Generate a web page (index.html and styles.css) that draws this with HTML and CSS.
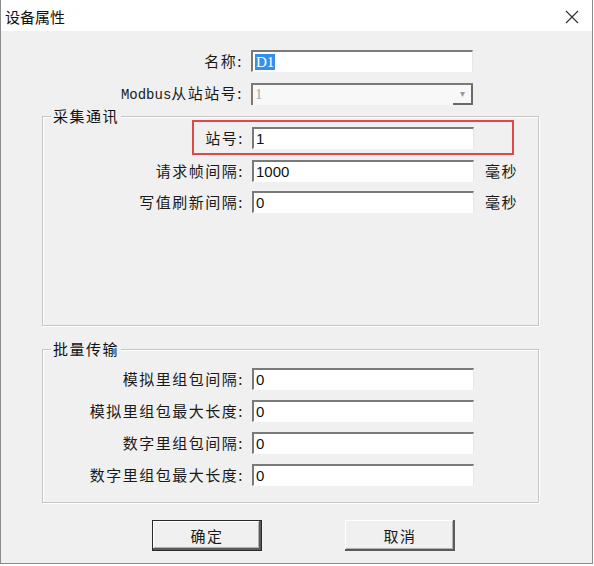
FILE: index.html
```html
<!DOCTYPE html>
<html lang="zh-CN">

<head>
  <meta charset="UTF-8">
  <title>设备属性</title>
  <link rel="stylesheet" href="styles.css">
</head>

<body>
  <div class="dialog">
    <div class="titlebar">
      <span class="title">设备属性</span>
      <svg class="close" width="14" height="14" viewBox="0 0 14 14">
        <path d="M1 1 L13 13 M13 1 L1 13" stroke="#333" stroke-width="1.2" fill="none" />
      </svg>
    </div>

    <div class="content">
      <div class="row top">
        <span class="lbl">名称:</span>
        <div class="field"><span class="selected">D1</span></div>
      </div>
      <div class="row top gap-11">
        <span class="lbl"><span class="mono">Modbus</span>从站站号:</span>
        <div class="field combo">
          <span class="muted">1</span>
          <span class="arrow">&#9662;</span>
        </div>
      </div>

      <!-- 采集通讯 -->
      <div class="group group-collect">
        <div class="legend">采集通讯</div>
        <div class="row highlight">
          <span class="lbl">站号:</span>
          <div class="field">1</div>
        </div>
        <div class="row in-group gap-5">
          <span class="lbl">请求帧间隔:</span>
          <div class="field">1000</div>
          <span class="unit">毫秒</span>
        </div>
        <div class="row in-group gap-9">
          <span class="lbl">写值刷新间隔:</span>
          <div class="field">0</div>
          <span class="unit">毫秒</span>
        </div>
      </div>

      <!-- 批量传输 -->
      <div class="group group-batch">
        <div class="legend">批量传输</div>
        <div class="row in-group gap-10">
          <span class="lbl">模拟里组包间隔:</span>
          <div class="field">0</div>
        </div>
        <div class="row in-group gap-10">
          <span class="lbl">模拟里组包最大长度:</span>
          <div class="field">0</div>
        </div>
        <div class="row in-group gap-10">
          <span class="lbl">数字里组包间隔:</span>
          <div class="field">0</div>
        </div>
        <div class="row in-group gap-10">
          <span class="lbl">数字里组包最大长度:</span>
          <div class="field">0</div>
        </div>
      </div>

      <div class="buttons">
        <button type="button" class="btn default">确定</button>
        <button type="button" class="btn">取消</button>
      </div>
    </div>
  </div>
</body>

</html>
```

FILE: styles.css
```css
body {
  margin: 0;
  background-color: #fff;
  font-family: "Noto Sans CJK SC", "Liberation Sans", sans-serif;
  color: #1a1a1a;
}

.dialog {
  width: 593px;
  height: 564px;
  box-sizing: border-box;
  border: 1px solid #8c8c8c;
  border-top: none;
  background-color: #f0f0f0;
}

.titlebar {
  height: 31px;
  background-color: #fff;
  display: flex;
  align-items: center;
  justify-content: space-between;
  padding: 2px 13px 0 4px;
  box-sizing: border-box;
}

.title {
  font-size: 15px;
  color: #111;
}

.close {
  display: block;
}

.content {
  padding-top: 19px;
  font-size: 15px;
  letter-spacing: 1.5px;
}

.row {
  display: flex;
  align-items: center;
  height: 22px;
}

.gap-5 { margin-top: 5px; }
.gap-9 { margin-top: 9px; }
.gap-10 { margin-top: 10px; }
.gap-11 { margin-top: 11px; }

.lbl {
  flex: none;
  text-align: right;
  margin-right: 8px;
  white-space: nowrap;
  line-height: 22px;
}

.top .lbl {
  width: 242px;
}

.in-group .lbl {
  width: 201px;
}

.mono {
  font-family: "Liberation Mono", monospace;
  font-size: 14px;
  letter-spacing: 0;
  color: #1a1a1a;
}

.field {
  flex: none;
  width: 222px;
  height: 22px;
  box-sizing: border-box;
  border-top: 2px solid #7a7a7a;
  border-left: 2px solid #7a7a7a;
  border-right: 1px solid #e6e6e6;
  border-bottom: 1px solid #fff;
  background-color: #fff;
  font-family: "Liberation Sans", sans-serif;
  font-size: 15px;
  letter-spacing: 0;
  line-height: 19px;
  padding-left: 2px;
  color: #111;
}

.selected {
  font-family: "Liberation Serif", serif;
  background-color: #3390ef;
  color: #fff;
  padding: 0 1px;
}

.combo {
  display: flex;
  justify-content: space-between;
  background-color: #f8f8f8;
  border-right: none;
  border-bottom: none;
}

.muted {
  font-family: "Liberation Serif", serif;
  color: #a8a8a8;
}

.arrow {
  width: 20px;
  height: 20px;
  box-sizing: border-box;
  border-right: 2px solid #6a6a6a;
  border-bottom: 2px solid #6a6a6a;
  text-align: center;
  font-size: 10px;
  line-height: 18px;
  color: #999;
}

.unit {
  margin-left: 11px;
  line-height: 22px;
}

.group {
  margin-left: 41px;
  width: 497px;
  box-sizing: border-box;
  border: 1px solid #c6c6c6;
  box-shadow: inset 1px 1px #fff, 1px 1px #fff;
}

.group-collect {
  margin-top: 11px;
  height: 210px;
}

.group-batch {
  margin-top: 23px;
  height: 154px;
}

.legend {
  width: fit-content;
  margin: -10px 0 0 8px;
  padding: 0 2px;
  line-height: 18px;
  background-color: #f0f0f0;
  color: #111;
}

.highlight {
  height: auto;
  margin: -5px 0 0 149px;
  width: 322px;
  box-sizing: border-box;
  border: 2px solid #e04848;
  padding: 5px 0 4px;
}

.highlight .lbl {
  width: 50px;
}

.buttons {
  display: flex;
  gap: 83px;
  margin: 17px 0 0 151px;
}

.btn {
  width: 110px;
  height: 31px;
  background-color: #f0f0f0;
  font-family: "Noto Sans CJK SC", sans-serif;
  font-size: 15px;
  letter-spacing: 1.5px;
  color: #1a1a1a;
  border: none;
  padding: 0;
  box-shadow: inset -2px -2px #5a5a5a, inset 1px 1px #fff, inset -3px -3px #b0b0b0;
}

.btn.default {
  border: 1px solid #2a2a2a;
}
```
